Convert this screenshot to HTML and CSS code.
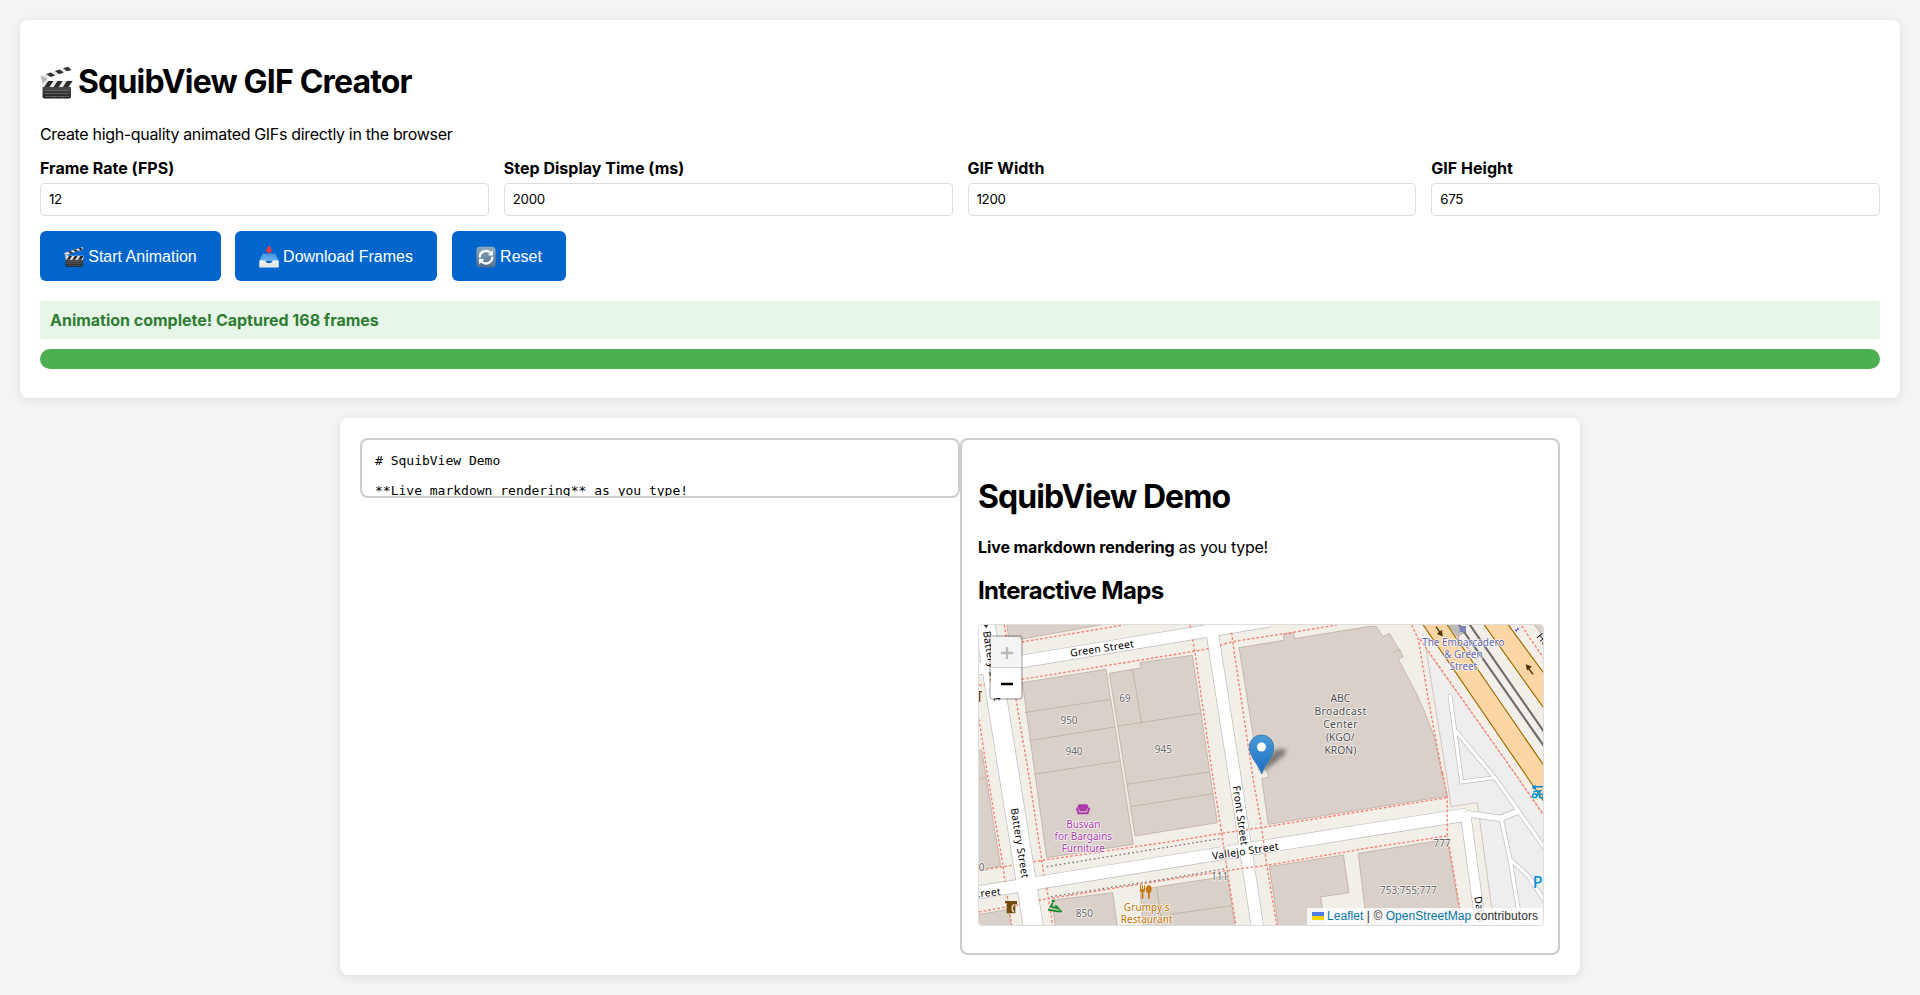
FILE: index.html
```html
<!DOCTYPE html>
<html lang="en">
<head>
<meta charset="utf-8">
<title>SquibView GIF Creator</title>
<link rel="stylesheet" href="styles.css">
</head>
<body>
<svg width="0" height="0" class="defs" aria-hidden="true">
  <defs>
    <linearGradient id="steel" x1="0" y1="0" x2="0" y2="1"><stop offset="0" stop-color="#8fa9bf"/><stop offset="1" stop-color="#4d6e8c"/></linearGradient>
    <linearGradient id="tray" x1="0" y1="0" x2="0" y2="1"><stop offset="0" stop-color="#3f8fe0"/><stop offset="1" stop-color="#6db4f2"/></linearGradient>
    <linearGradient id="board" x1="0" y1="0" x2="0" y2="1"><stop offset="0" stop-color="#4a4a4a"/><stop offset="1" stop-color="#1c1c1c"/></linearGradient>
    <symbol id="clapper" viewBox="0 0 32 32">
      <path d="M.5 9.500 29.500 0l1.500 3.700L2 13.300z" fill="#e4e4e4"/>
      <path d="M6 7.700l4.500-1.500 4.300 3-4.500 1.500zM14.500 4.900l4.500-1.500 4 3-4.500 1.500zM22.500 2.300l4.500-1.500 3.500 3-4.200 1.400z" fill="#333"/>
      <path d="M.5 9.500 7 12l-1 3.500-3 3z" fill="#b5b5b5"/>
      <path d="M3 15.500 6 14h26l-2 7H3z" fill="#ececec"/>
      <path d="M4 20.500l4-6h5l-4 6zM13 20.500l4-6h5l-4 6zM22 20.500l4-6h5.500l-4 6z" fill="#2b2b2b"/>
      <path d="M2.500 20.300h27.500v9.200q0 2-2 2H4.500q-2 0-2-2z" fill="url(#board)"/>
      <path d="M4.500 23.500h24M4.500 26.800h24M4.500 29.500h24M14 29.500v2M22 29.500v2" stroke="#7d7d7d" stroke-width=".7"/>
    </symbol>
    <symbol id="inbox" viewBox="0 0 20 22">
      <path d="M3.500 7.500h13L19.500 15H.5z" fill="url(#tray)"/>
      <path d="M.3 14.500h6q.7 2.700 3.700 2.700t3.700-2.700h6v6.200q0 .8-.8.8H1.100q-.8 0-.8-.8z" fill="#f1f1ee"/>
      <path d="M.5 17.500v3.500h19v-3.500z" fill="#dedede" opacity=".5"/>
      <path d="M8.300.5h3.400v3h2.300L10 7.800 6 3.500h2.300z" fill="#f0383b"/>
    </symbol>
    <symbol id="cycle" viewBox="0 0 20 22">
      <rect x=".3" y=".8" width="19.400" height="20.700" rx="3.800" fill="url(#steel)"/>
      <path d="M3.700 11.500A6.300 6.300 0 0 1 14.500 6.800M16.300 10.800A6.300 6.300 0 0 1 5.500 15.500" fill="none" stroke="#fff" stroke-width="2.300"/>
      <path d="M11.800 9.300l5.200.2-.2-5.500zM8.200 13l-5.200-.2.200 5.500z" fill="#fff"/>
    </symbol>
  </defs>
</svg>

<section class="controls">
  <h1 class="title"><svg class="title-icon"><use href="#clapper"/></svg>SquibView GIF Creator</h1>
  <p class="lead">Create high-quality animated GIFs directly in the browser</p>
  <div class="fields">
    <div class="field"><label for="fps">Frame Rate (FPS)</label><input id="fps" value="12"></div>
    <div class="field"><label for="step">Step Display Time (ms)</label><input id="step" value="2000"></div>
    <div class="field"><label for="gw">GIF Width</label><input id="gw" value="1200"></div>
    <div class="field"><label for="gh">GIF Height</label><input id="gh" value="675"></div>
  </div>
  <div class="buttons">
    <button class="btn start"><svg class="btn-icon"><use href="#clapper"/></svg>Start Animation</button>
    <button class="btn download"><svg class="btn-icon"><use href="#inbox"/></svg>Download Frames</button>
    <button class="btn reset"><svg class="btn-icon"><use href="#cycle"/></svg>Reset</button>
  </div>
  <div class="status">Animation complete! Captured 168 frames</div>
  <div class="progress"><div class="progress-fill" style="width:100%"></div></div>
</section>

<section class="demo">
  <pre class="source"># SquibView Demo

**Live markdown rendering** as you type!</pre>
  <article class="preview">
    <h1>SquibView Demo</h1>
    <p><strong>Live markdown rendering</strong> as you type!</p>
    <h2>Interactive Maps</h2>
    <div class="map">
      <svg class="tiles" viewBox="27 27 1692 900">
        <defs>
          <linearGradient id="pin" x1="0" y1="0" x2="0" y2="1"><stop offset="0" stop-color="#4a9bd6"/><stop offset="1" stop-color="#1a6fc4"/></linearGradient>
          <filter id="soft" x="-50%" y="-50%" width="200%" height="200%"><feGaussianBlur stdDeviation="7"/></filter>
        </defs>
        <rect x="27" y="27" width="1692" height="900" fill="#f2efe9"/>
        <path class="lot" d="M1368 100 1745 627V940H1577L1565 875 1522 560 1443 572 1430 480z"/>

        <g class="building">
          <path d="M110 20H430L150 70 117 76z"/>
          <path d="M157 200 408 160 490 685 230 725z"/>
          <path d="M418 172 488 160 513 156 510 140 667 118 742 620 495 660z"/>
          <path d="M807 95 942 73 940 55 970 50 974 68 1200 31 1220 32 1238 62 1258 52 1300 122 1285 130 1338 230 1365 290 1392 360 1415 470 1432 540 895 625 875 488 896 484 890 460 866 462z"/>
          <path d="M245 853 428 830 443 940H258z"/>
          <path d="M510 821 772 780 797 940H520z"/>
          <path d="M898 752 1120 717 1137 830 1052 843 1066 940H926z"/>
          <path d="M1165 712 1432 670 1478 940H1192z"/>
          <path d="M20 402 35 402 92 750 20 762zM20 897 115 880 125 940H20z"/>
          <path d="M1688 20H1730V75z"/>
          <path d="M163 290 420 250M178 374 433 333M190 475 450 435M488 160 515 322M440 331 692 292M470 505 717 468M483 572 728 533M600 895 785 869M560 815 577 928M27 490 50 485M1270 110 1288 100 1294 106" fill="none"/>
        </g>

        <g class="casing">
          <path d="M0 162 900 14" stroke-width="40"/><path d="M41 0 193 950" stroke-width="62"/>
          <path d="M722 20 794 480 865 950" stroke-width="39"/>
          <path d="M0 833 600 737 1200 641 1488 596" stroke-width="41"/>
          <path d="M1486 590 1535 950" stroke-width="33"/>
          <path d="M1490 593 1592 607 1645 585" stroke-width="21"/>
          <g stroke-width="14" stroke-linecap="round"><path d="M1440 240 1475 498 1575 485 1645 585 1730 705M1459 347 1570 480M1594 610 1620 730 1645 880 1657 940M1620 730 1675 780 1730 865"/></g>
        </g>
        <g class="road">
          <path d="M0 162 900 14" stroke-width="36"/><path d="M41 0 193 950" stroke-width="58"/>
          <path d="M722 20 794 480 865 950" stroke-width="35"/>
          <path d="M0 833 600 737 1200 641 1488 596" stroke-width="37"/>
          <path d="M1486 590 1535 950" stroke-width="29"/>
          <path d="M1490 593 1592 607 1645 585" stroke-width="17"/>
          <g stroke-width="10" stroke-linecap="round"><path d="M1440 240 1475 498 1575 485 1645 585 1730 705M1459 347 1570 480M1594 610 1620 730 1645 880 1657 940M1620 730 1675 780 1730 865"/></g>
        </g>

        <path class="platform" d="M1430 20H1460L1484 50 1462 62z"/>
        <g class="highway">
          <path d="M1355 20H1427L1750 490V598z"/>
          <path d="M1538 20H1610L1750 210V316z"/>
        </g>
        <path class="rail" d="M1463 20 1730 402M1495 20 1730 359"/>

        <path class="foot" d="M103 27 137 245 177 480 222 778M155 78 460 27M155 190 600 118 715 98M750 88 787 77 950 52 1100 27M27 207H44M27 310 53 480 100 755 105 798M48 760 127 748M190 737 600 677 755 652 872 635 1200 582 1430 545M660 27 662 35M668 70 675 110 728 480 755 650 768 740 798 928M785 50 790 90 848 480 875 635 890 745 920 928M230 815 248 928M205 853 600 790 775 763 890 748 1200 695 1432 660M27 888 150 865M112 840 125 928M1418 470 1432 545V660L1468 870 1476 928M1325 27 1345 70 1375 250 1418 480M1350 70 1640 480 1725 605M1655 30 1725 132M1463 60 1520 130"/>
        <path class="steps" d="M230 752 600 692 755 667M243 842 600 787 765 758"/>

        <g class="arrows"><path d="M1398 32 1412 52M1689 175 1675 156"/><path d="M1417 60 1402 53 1415 43zM1668 146 1684 152 1672 162z" fill="#4d3300" stroke-width="2"/></g>
        <rect x="1469" y="30" width="19" height="18" fill="#7a82b8"/>
        <path d="M1637 45 1648 35" stroke="#33f" stroke-width="6" stroke-dasharray="4 3"/>

        <g class="label street">
          <text transform="translate(302 122) rotate(-8.500)" textLength="193">Green Street</text>
          <text transform="translate(728 731) rotate(-8.500)" textLength="201">Vallejo Street</text>
          <text transform="translate(122 578) rotate(81)" textLength="212">Battery Street</text>
          <text transform="translate(39 47) rotate(81)" textLength="212">Battery Street</text>
          <text transform="translate(788 511) rotate(82)" textLength="180">Front Street</text>
          <text transform="translate(-107 858) rotate(-6)" textLength="201">Vallejo Street</text>
          <text transform="translate(1513 843) rotate(81)">Davis</text>
          <text transform="translate(1698 62) rotate(50)">Howard</text>
        </g>
        <path d="M41 27H54L50 37z" fill="#333"/>
        <g class="label number">
          <text x="297" y="325">950</text><text x="312" y="416">940</text><text x="465" y="257">69</text><text x="580" y="412">945</text>
          <text x="343" y="903">850</text><text x="749" y="793">111</text><text x="1416" y="692">777</text><text x="1315" y="835" textLength="170">753;755;777</text>
          <text x="30" y="764">70.</text>
        </g>
        <g class="label place">
          <text x="1111" y="257">ABC</text><text x="1111" y="296" textLength="155">Broadcast</text><text x="1111" y="335" textLength="103">Center</text><text x="1111" y="374">(KGO/</text><text x="1111" y="413">KRON)</text>
        </g>
        <g class="label transit">
          <text x="1480" y="91" textLength="247">The Embarcadero</text><text x="1480" y="127">&amp; Green</text><text x="1480" y="163" textLength="83">Street</text>
        </g>
        <g class="label shop">
          <text x="340" y="636" textLength="102">Busvan</text><text x="340" y="672" textLength="173">for Bargains</text><text x="340" y="708" textLength="130">Furniture</text>
        </g>
        <path d="M323 573q0-8 7-8h18q7 0 7 8v4q-5 0-6 9h-20q-1-9-6-9zM318 575q6-2 7 5l2 9h24l2-9q1-7 7-5 1 8-4 14v6h-34v-6q-5-6-4-14z" fill="#ac39ac"/>
        <g class="label food"><text x="530" y="886" textLength="137">Grumpy's</text><text x="530" y="920" textLength="155">Restaurant</text></g>
        <path d="M510 808h3v12h3v-12h3v12h3v-12h3v13q0 6-5 8v19h-5v-19q-5-2-5-8z M536 808q9 0 9 12 0 9-6 12v16h-5v-16q-6-3-6-12 0-12 8-12z" fill="#c77400"/>
        <path d="M105 855H141V864H136V892H110V862H105z" fill="#734a08"/>
        <path d="M133 865Q120 876 132 889" fill="none" stroke="#f2efe9" stroke-width="4"/>
        <path d="M27 225H36V229H31V257H27z" fill="#734a08"/>
        <g fill="none" stroke="#0d8a22" stroke-width="5"><circle cx="250" cy="855" r="2"/><path d="M248 861 242 872 266 878 256 868M234 881 262 886H276"/></g>
        <g fill="none" stroke="#0092da" stroke-width="4.500"><circle cx="1693" cy="514" r="4" fill="#0092da"/><path d="M1696 512H1719M1690 527 1712 524 1700 540"/><circle cx="1694" cy="539" r="6"/><circle cx="1714" cy="540" r="6"/></g>
        <text x="1688" y="815" class="parking">P</text>

        <path d="M876 470 940 420Q962 395 925 400 890 410 876 470" fill="#333" opacity=".55" filter="url(#soft)"/>
        <path d="M875 474C866 444 838 424 838 393a36.500 36 0 0 1 73 0C911 424 884 444 875 474z" fill="url(#pin)" stroke="#2e76b3" stroke-width="2.500"/>
        <circle cx="874.500" cy="393" r="13.500" fill="#fff"/>
      </svg>
      <div class="zoom"><span class="zoom-btn off"><svg viewBox="0 0 14 14"><path d="M1 7h12M7 1v12"/></svg></span><span class="zoom-btn"><svg viewBox="0 0 14 14"><path d="M1 7h12"/></svg></span></div>
      <div class="credit"><svg class="flag" viewBox="0 0 12 8"><path fill="#4c7be1" d="M0 0h12v4H0z"/><path fill="#ffd500" d="M0 4h12v4H0z"/></svg> <a>Leaflet</a> | © <a>OpenStreetMap</a> contributors</div>
    </div>
  </article>
</section>
</body>
</html>
```

FILE: styles.css
```css
* { box-sizing: border-box; }
body { margin: 0; padding: 20px; background: #f4f4f4; color: #000; font: 16px/19px Inter, sans-serif; overflow: hidden; }
.defs { position: absolute; }
.controls { height: 378px; padding: 20px; background: #fff; border-radius: 8px; box-shadow: 0 2px 10px rgba(0,0,0,.1); }
h1 { margin: 21.44px 0; font-size: 32px; line-height: 38px; font-weight: 700; letter-spacing: -.9px; }
.title { display: flex; align-items: center; gap: 5px; line-height: 42px; letter-spacing: -.83px; }
.title-icon { width: 33px; height: 33px; }
.lead { margin: 0 0 15px; letter-spacing: -.33px; }
.fields { display: grid; grid-template-columns: repeat(4, 1fr); gap: 15px; }
.field { display: flex; flex-direction: column; gap: 5px; }
label { font-weight: 700; letter-spacing: .02px; }
input { height: 33px; padding: 8px; border: 1px solid #ddd; border-radius: 4px; font: 13.33px Inter, sans-serif; letter-spacing: -.3px; }
.buttons { display: flex; gap: 14px; margin: 15px 0 20px; }
.btn { display: flex; align-items: center; justify-content: center; gap: 4px; height: 50px; padding: 3px 0 0; border: 0; border-radius: 6px; background: #0066cc; color: #fff; font: 16px "Liberation Sans", sans-serif; }
.start { width: 181px; } .download { width: 202px; } .reset { width: 114px; margin-left: 1px; }
.btn-icon { width: 20px; height: 22px; }
.status { height: 38px; padding: 10px; border-radius: 4px; background: #e8f5e9; color: #2e7d32; font-weight: 700; letter-spacing: -.01px; }
.progress { height: 20px; margin-top: 10px; border-radius: 10px; background: #e0e0e0; overflow: hidden; }
.progress-fill { height: 100%; background: #4caf50; }

.demo { display: flex; align-items: flex-start; width: 1240px; height: 557px; margin: 20px auto 0; padding: 20px; background: #fff; border-radius: 8px; box-shadow: 0 2px 10px rgba(0,0,0,.1); }
.source { flex: none; width: 600px; height: 60px; margin: 0; padding: 13px; border: 2px solid #ccc; border-radius: 8px; overflow: hidden; font: 13px/15px "DejaVu Sans Mono", monospace; }
.preview { flex: none; width: 600px; height: 517px; padding: 16px; border: 2px solid #ccc; border-radius: 8px; }
.preview h1 { margin-bottom: 20.44px; line-height: 40px; margin-top: 21.44px; }
.preview p { margin: 0; letter-spacing: -.28px; }
.preview strong { letter-spacing: -.1px; }
h2 { margin: 20px 0 19px; font-size: 24px; line-height: 28px; letter-spacing: -.67px; }
.map { position: relative; width: 566px; height: 302px; border: 1px solid #ddd; border-radius: 4px; overflow: hidden; }
.tiles { display: block; width: 564px; height: 300px; font-family: "Noto Sans", sans-serif; }
.building { fill: #d9d0c9; stroke: #bfae9f; stroke-width: 2.5; }
.lot { fill: #eee; stroke: #d3c5c0; stroke-width: 3; }
.casing { fill: none; stroke: #bbb; }
.road { fill: none; stroke: #fff; }
.platform { fill: #bbb; stroke: #999; }
.highway { fill: #fcd6a4; stroke: #a06b00; stroke-width: 3.5; }
.rail { fill: none; stroke: #6e6e6e; stroke-width: 6.5; }
.foot { fill: none; stroke: #fa8072; stroke-width: 4.2; stroke-dasharray: 8 6; }
.steps { fill: none; stroke: #777; stroke-width: 4; stroke-dasharray: 5 8; }
.arrows { fill: none; stroke: #4d3300; stroke-width: 4; }
.label { font-size: 30px; text-anchor: middle; paint-order: stroke; stroke: rgba(255,255,255,.75); stroke-width: 5px; stroke-linejoin: round; }
.street { text-anchor: start; fill: #000; font-size: 31px; }
.number { fill: #666; }
.place { fill: #4d4d4d; font-size: 31px; }
.transit { fill: #6068b5; }
.shop { fill: #ac39ac; }
.food { fill: #c77400; }
.parking { fill: #0092da; font-size: 48px; font-weight: 500; }
.zoom { position: absolute; left: 10px; top: 10px; width: 34px; height: 65px; border: 2px solid rgba(0,0,0,.2); border-radius: 4px; background-clip: padding-box; overflow: hidden; }
.zoom-btn { display: flex; align-items: center; justify-content: center; height: 30px; padding: 3px 0 0 1px; background: #fff; }
.zoom-btn svg { width: 14px; height: 14px; stroke: #000; stroke-width: 2.4; }
.zoom .off { height: 31px; padding-top: 2px; background: #f4f4f4; border-bottom: 1px solid #ccc; }
.zoom .off svg { stroke: #bbb; }
.credit { position: absolute; right: 0; bottom: 0; height: 17px; padding: 0 5px; background: rgba(255,255,255,.8); color: #333; font: 12px/17px "Liberation Sans", sans-serif; letter-spacing: .06px; white-space: nowrap; }
.credit a { color: #0078a8; }
.flag { width: 12px; height: 8px; }
```
